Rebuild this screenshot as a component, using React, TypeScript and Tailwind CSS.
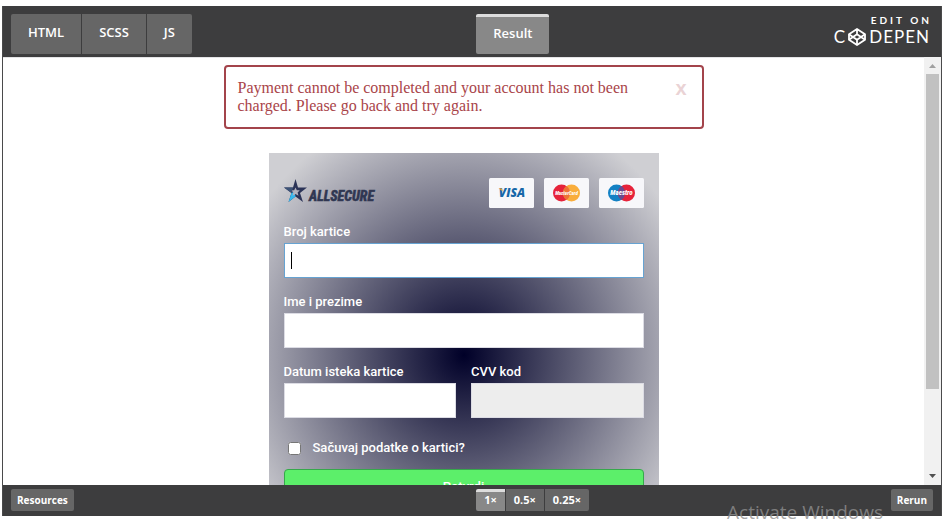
import clsx from "clsx";

const panels = [
  { name: "HTML", style: "rounded-l-xs" },
  { name: "SCSS", style: "" },
  { name: "JS", style: "rounded-r-xs" },
];

const zooms = ["1×", "0.5×", "0.25×"];

const inputStyle = "block h-[35px] w-full border border-[#dcdce4] bg-white px-2 text-sm text-black outline-none disabled:bg-[#ededed]";

const CodepenLogo = () => (
  <span className="flex items-center gap-[3px] text-[17px] leading-4 font-normal">
    <span>C</span>
    <svg width="18" height="18" viewBox="0 0 18 18" fill="none" stroke="currentColor" strokeWidth="1.8" strokeLinejoin="round">
      <path d="M9 1 17 6.2v5.6L9 17 1 11.8V6.2Z" />
      <path d="M9 1v5.2M9 11.8V17M1 6.2l8 5.6 8-5.6M1 11.8l8-5.6 8 5.6" />
    </svg>
    <span className="-mr-px tracking-[1px]">DEPEN</span>
  </span>
);

const AllSecureLogo = () => (
  <svg width="100" height="28" viewBox="0 0 100 28" role="img" aria-label="AllSecure">
    <path d="M11.5 0 14 8.5h9l-7 5.5 3 9-7.5-5.5L4.5 23l3-9L0 8.5h9Z" fill="#2b3357" />
    <path d="m7.5 14 3-1.5 1 5L4.5 23Z" fill="#35b8ef" />
    <path d="m11.5 8.5 1.3 2.8h3l-2.2 2.2.9 3.2-3-1.8-3 1.8.9-3.2-2.2-2.2h3Z" fill="#b3b2bd" />
    <path d="M0 8.5h9L7.5 14Z" fill="#3c5377" />
    <text x="25" y="22" fill="#303752" stroke="#303752" strokeWidth="0.5" fontFamily="'Roboto Condensed', 'Liberation Sans', sans-serif" fontSize="14" fontWeight="800" fontStyle="italic">
      ALLSECURE
    </text>
  </svg>
);

const VisaBadge = () => (
  <svg width="45" height="30" viewBox="0 0 45 30" role="img" aria-label="Visa">
    <rect width="45" height="30" rx="1.5" fill="#f7f7fa" />
    <text x="23" y="19" textAnchor="middle" fill="#1767a8" fontFamily="'Open Sans', sans-serif" fontSize="12" fontWeight="800" fontStyle="italic">
      VISA
    </text>
    <path d="m9.5 10.3 3.4.1 1 3Z" fill="#f0a63a" />
  </svg>
);

const CirclesBadge = ({ name, left, right, middle }: { name: string; left: string; right: string; middle: string }) => (
  <svg width="45" height="30" viewBox="0 0 45 30" role="img" aria-label={name}>
    <rect width="45" height="30" rx="1.5" fill="#f7f7fa" />
    <circle cx="17.5" cy="15" r="8.5" fill={left} />
    <circle cx="27.5" cy="15" r="8.5" fill={right} />
    <path d="M22.5 8.1a8.5 8.5 0 0 1 0 13.8 8.5 8.5 0 0 1 0-13.8Z" fill={middle} />
    <text x="22.5" y="17" textAnchor="middle" fill="#fff" fontFamily="'Roboto Condensed', sans-serif" fontSize={name === "Maestro" ? 7 : 5} fontWeight="800" fontStyle="italic">
      {name}
    </text>
  </svg>
);

const Alert = () => (
  <div className="flex w-[480px] items-start justify-between gap-3 rounded border-2 border-[#a3444b] px-3 py-3 text-[#a94449]">
    <p className="font-['Liberation_Serif'] text-base leading-[18px]">
      Payment cannot be completed and your account has not been charged. Please go back and try again.
    </p>
    <button aria-label="Close" className="px-[3px] font-['Liberation_Sans'] text-xl leading-[18px] font-bold text-[#ead3d5]">
      x
    </button>
  </div>
);

const CardForm = () => (
  <form
    className="w-[390px] shrink-0 bg-[radial-gradient(ellipse_at_center,#000028_0%,#cfcfd3_90%)] px-[15px] pt-[25px] pb-[53px] font-['Roboto'] text-[13px] leading-[18px] font-medium text-white"
    onSubmit={(e) => e.preventDefault()}
  >
    <div className="mb-[15px] flex h-[30px] items-center justify-between">
      <AllSecureLogo />
      <div className="flex gap-2.5">
        <VisaBadge />
        <CirclesBadge name="MasterCard" left="#e6233b" right="#f9ad3c" middle="#ee7136" />
        <CirclesBadge name="Maestro" left="#1481c4" right="#e6233b" middle="#6b4a8e" />
      </div>
    </div>

    <div className="grid grid-cols-2 gap-[15px]">
      <div className="col-span-2">
        <label htmlFor="number" className="mb-0.5 block">Broj kartice</label>
        <div className="flex h-[35px] items-center border border-[#66a3d2] bg-white pl-1.5">
          <span className="h-[17px] w-px bg-black" />
          <input id="number" type="text" className="h-full min-w-0 flex-1 text-sm text-black caret-transparent outline-none" />
        </div>
      </div>
      <div className="col-span-2">
        <label htmlFor="name" className="mb-0.5 block">Ime i prezime</label>
        <input id="name" type="text" className={inputStyle} />
      </div>
      <div>
        <label htmlFor="expiry" className="mb-0.5 block">Datum isteka kartice</label>
        <input id="expiry" type="text" className={inputStyle} />
      </div>
      <div>
        <label htmlFor="cvv" className="mb-0.5 block">CVV kod</label>
        <input id="cvv" type="text" disabled className={inputStyle} />
      </div>
    </div>

    <div className="mt-[21px] mb-3 flex items-center gap-3 pl-1">
      <input id="save" type="checkbox" className="size-[13px]" />
      <label htmlFor="save">Sačuvaj podatke o kartici?</label>
    </div>
    <button type="submit" className="h-[35px] w-full rounded border border-[#36a84b] bg-[#5cef6a]">
      Potvrdi
    </button>
  </form>
);

export default function App() {
  return (
    <div className="relative h-screen overflow-hidden bg-white pt-1.5 pr-2 pb-2 pl-0.5 font-['Open_Sans'] text-white">
      <div className="flex h-full flex-col border-x border-[#4a4a4b] bg-white">
        <header className="flex h-[51px] shrink-0 items-end justify-between bg-[#3d3d3e] px-2 pb-[3px] text-[13px] font-semibold">
          <div className="flex gap-px">
            {panels.map((panel) => (
              <button key={panel.name} className={clsx("h-10 bg-[#666] px-[17px] pb-0.5", panel.style)}>
                {panel.name}
              </button>
            ))}
          </div>
          <button className="h-10 rounded-xs border-t-3 border-[#ddd] bg-[#888] px-[17px] pb-[3px]">Result</button>
          <a href="#" className="flex flex-col items-end gap-0.5 pr-1 pb-2 font-['Lato']">
            <span className="-mr-[3px] text-[10px] leading-3 font-bold tracking-[3px]">EDIT ON</span>
            <CodepenLogo />
          </a>
        </header>

        <main className="flex min-h-0 flex-1">
          <div className="flex min-w-0 flex-1 flex-col items-center gap-6 overflow-x-hidden overflow-y-auto border-t border-[#e4e4e6] pt-[7px] [scrollbar-width:none]">
            <Alert />
            <CardForm />
          </div>
          <div className="flex w-[17px] flex-col items-center bg-[#f1f1f1]">
            <svg width="17" height="17" viewBox="0 0 17 17" className="shrink-0">
              <path d="m5 11 3.5-4 3.5 4Z" fill="#a0a0a0" />
            </svg>
            <div className="w-[13px] grow-4 bg-[#c1c1c1]" />
            <div className="grow" />
            <svg width="17" height="17" viewBox="0 0 17 17" className="shrink-0">
              <path d="m5 6 3.5 4L12 6Z" fill="#505050" />
            </svg>
          </div>
        </main>

        <footer className="flex h-[31px] shrink-0 items-start bg-[#3d3d3e] px-2 pt-1 text-[10px] font-bold">
          <button className="h-[22px] rounded-xs bg-[#666] px-1.5">Resources</button>
          <div className="grow-4" />
          <div className="flex gap-px text-[11px]">
            {zooms.map((zoom, i) => (
              <button
                key={zoom}
                className={clsx("h-[22px] px-2", i === 0 ? "rounded-l-xs border-t-3 border-[#ddd] bg-[#888] pb-[3px]" : "bg-[#666]", i === 2 && "rounded-r-xs")}
              >
                {zoom}
              </button>
            ))}
          </div>
          <div className="grow-3" />
          <button className="h-[22px] rounded-xs bg-[#666] px-1.5">Rerun</button>
        </footer>
      </div>

      <div className="pointer-events-none absolute right-[67px] bottom-0 text-[19px] leading-6 text-[#8f8f8f]/80">
        Activate Windows
      </div>
    </div>
  );
}
